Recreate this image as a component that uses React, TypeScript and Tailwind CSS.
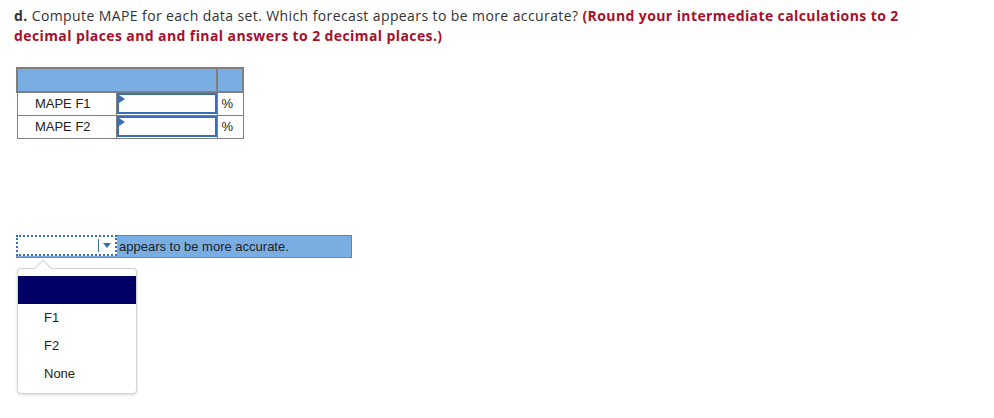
import React from 'react';

const rows = ['MAPE F1', 'MAPE F2'];
const options = ['F1', 'F2', 'None'];

export default function App() {
  return (
    <div className="w-[994px] h-[418px] bg-white relative" style={{ fontFamily: '"Open Sans", sans-serif' }}>
      <p className="pt-[6px] pl-[14px] w-[930px] text-[14px] leading-[20px] tracking-[0.4px] text-[#333]">
        <b>d.</b> Compute MAPE for each data set. Which forecast appears to be more accurate?{' '}
        <b className="text-[#a8102a]">
          (Round your intermediate calculations to 2 decimal places and and final answers to 2 decimal places.)
        </b>
      </p>

      <table
        className="mt-[21px] ml-[16px] border-collapse text-[13px] text-[#222]"
        style={{ fontFamily: '"Liberation Sans", Arial, sans-serif' }}
      >
        <tbody>
          <tr className="h-[24px] bg-[#7aaee3]">
            <td colSpan={2} className="border-2 border-[#808080] w-[200px]"></td>
            <td className="border-2 border-[#808080] w-[26px]"></td>
          </tr>
          {rows.map((r) => (
            <tr key={r} className="h-[23px]">
              <td className="border border-[#808080] w-[99px] text-center pr-2">{r}</td>
              <td className="border border-[#808080] p-0 w-[100px]">
                <div className="relative h-[21px] border-2 border-[#3a6fb6] bg-white">
                  <span className="absolute left-0 top-0 w-0 h-0 border-t-[4px] border-b-[4px] border-l-[6px] border-t-transparent border-b-transparent border-l-[#3a6fb6]"></span>
                </div>
              </td>
              <td className="border border-[#808080] pl-[4px]">%</td>
            </tr>
          ))}
        </tbody>
      </table>

      <div
        className="mt-[96px] ml-[16px] flex w-[336px] h-[23px] bg-[#7aaee3] border border-[#808080] text-[13px] text-[#222]"
        style={{ fontFamily: '"Liberation Sans", Arial, sans-serif' }}
      >
        <div className="flex w-[101px] h-full -m-px bg-white border-2 border-dotted border-[#3a6fb6]">
          <div className="flex-1"></div>
          <div className="w-px my-[2px] bg-[#3a6fb6]"></div>
          <div className="w-[16px] flex items-center justify-center">
            <span className="w-0 h-0 border-l-[4px] border-r-[4px] border-t-[5px] border-l-transparent border-r-transparent border-t-[#3a6fb6]"></span>
          </div>
        </div>
        <span className="ml-[3px] leading-[21px]">appears to be more accurate.</span>
      </div>

      <div className="absolute left-[17px] top-[268px] w-[120px] h-[126px] bg-white border border-[#d4d4d4] rounded-[4px] shadow-[0_1px_3px_rgba(0,0,0,0.15)]">
        <span className="absolute -top-[7px] left-[19px] w-[12px] h-[12px] bg-white border-l border-t border-[#d4d4d4] rotate-45"></span>
        <div className="relative mt-[7px] h-[28px] bg-[#000066]"></div>
        <ul className="text-[13px] text-[#222]" style={{ fontFamily: '"Liberation Sans", Arial, sans-serif' }}>
          {options.map((o) => (
            <li key={o} className="h-[28px] leading-[28px] pl-[26px]">{o}</li>
          ))}
        </ul>
      </div>
    </div>
  );
}
